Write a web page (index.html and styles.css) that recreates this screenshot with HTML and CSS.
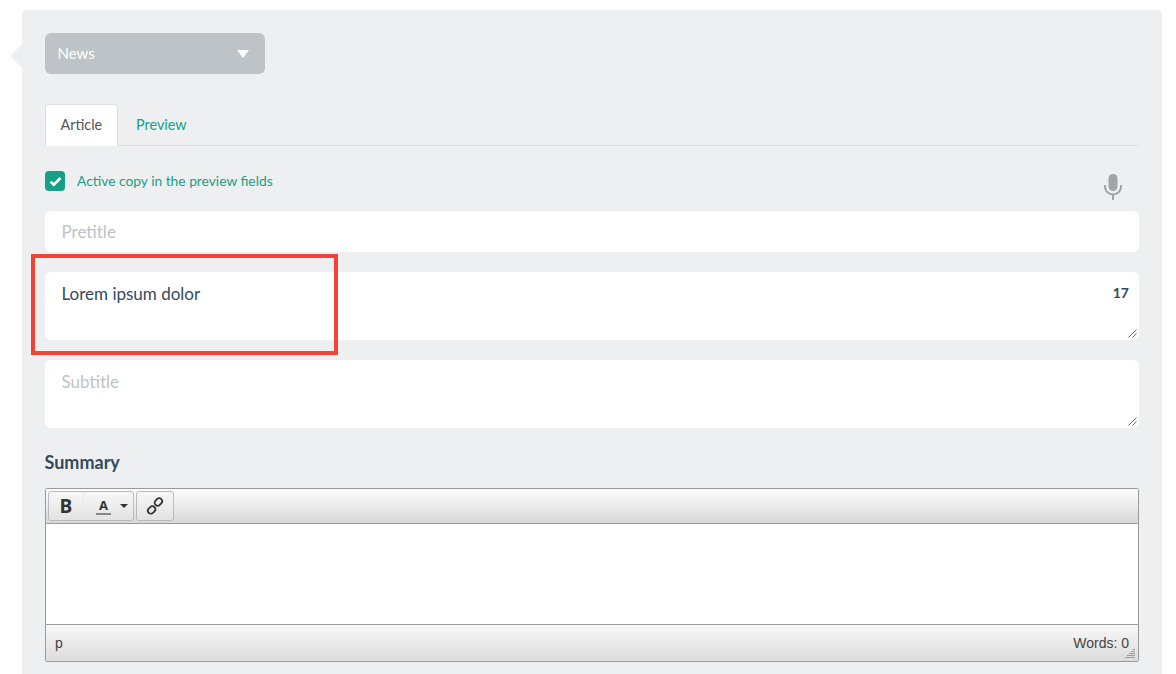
FILE: index.html
```html
<!DOCTYPE html>
<html lang="en">
  <head>
    <meta charset="UTF-8" />
    <title>Article</title>
    <link rel="stylesheet" href="styles.css">
  </head>
  <body>
    <div class="panel">
      <span class="panel-arrow"></span>
      <div class="select-box">
        <span class="select-label">News</span>
        <span class="select-caret"></span>
      </div>

      <ul class="tabs">
        <li class="tab active">Article</li>
        <li class="tab">Preview</li>
      </ul>

      <div class="copy-row">
        <label class="check-label">
          <span class="check-box">
            <svg width="13" height="11" viewBox="0 0 13 11"><path d="M1.5 5.6 L4.8 8.6 L11.5 2" fill="none" stroke="#fff" stroke-width="2.6"/></svg>
          </span>
          <span class="check-text">Active copy in the preview fields</span>
        </label>
        <svg class="mic" width="18" height="26" viewBox="0 0 18 26">
          <rect x="4.5" y="0" width="9" height="17" rx="4.5" fill="#a3a3a3"/>
          <path d="M1 11 v2 a8 7.5 0 0 0 16 0 v-2" fill="none" stroke="#a3a3a3" stroke-width="2"/>
          <rect x="8" y="20" width="2" height="6" fill="#a3a3a3"/>
        </svg>
      </div>

      <div class="field field-single placeholder">Pretitle</div>

      <div class="field-wrap">
        <div class="field field-multi">Lorem ipsum dolor</div>
        <span class="counter">17</span>
        <svg class="grip" width="9" height="9" viewBox="0 0 9 9"><path d="M0.5 8.5 L8.5 0.5 M4.5 8.5 L8.5 4.5" stroke="#666" stroke-width="1" fill="none"/></svg>
        <div class="highlight"></div>
      </div>

      <div class="field-wrap">
        <div class="field field-multi placeholder">Subtitle</div>
        <svg class="grip" width="9" height="9" viewBox="0 0 9 9"><path d="M0.5 8.5 L8.5 0.5 M4.5 8.5 L8.5 4.5" stroke="#666" stroke-width="1" fill="none"/></svg>
      </div>

      <h3 class="section-title">Summary</h3>

      <div class="editor">
        <div class="editor-toolbar">
          <div class="btn-group">
            <span class="btn btn-bold">B</span>
            <span class="btn btn-color"><span class="letter-a">A</span><span class="mini-caret"></span></span>
          </div>
          <div class="btn-group">
            <span class="btn btn-link">
              <svg width="18" height="18" viewBox="0 0 18 18" fill="none" stroke="#333" stroke-width="1.8">
                <rect x="8.4" y="2" width="8" height="6" rx="3" transform="rotate(-45 12.4 5)"/>
                <rect x="1.6" y="10" width="8" height="6" rx="3" transform="rotate(-45 5.6 13)"/>
              </svg>
            </span>
          </div>
        </div>
        <div class="editor-body"></div>
        <div class="editor-status">
          <span>p</span>
          <span>Words: 0</span>
          <svg class="status-grip" width="10" height="10" viewBox="0 0 10 10"><path d="M8 1.5 h2 M6 3.5 h4 M4 5.5 h6 M2 7.5 h8 M0 9.5 h10" stroke="#999" stroke-width="1"/></svg>
        </div>
      </div>
    </div>
  </body>
</html>
```

FILE: styles.css
```css
html,
body {
  margin: 0;
  height: 674px;
  overflow: hidden;
  background: #fff;
}

body {
  padding: 10px 14px 0 22px;
  box-sizing: border-box;
  font-family: Lato, sans-serif;
}

.panel {
  position: relative;
  height: 664px;
  box-sizing: border-box;
  padding: 23px 23px 0 23px;
  background: #eeeff1;
  border-radius: 4px 4px 0 0;
}
.panel-arrow {
  position: absolute;
  left: -12px;
  top: 34px;
  border-top: 12px solid transparent;
  border-bottom: 12px solid transparent;
  border-right: 12px solid #eeeff1;
}

.select-box {
  display: flex;
  justify-content: space-between;
  align-items: center;
  width: 220px;
  height: 41px;
  box-sizing: border-box;
  padding: 0 16px 0 12.5px;
  background: #bdc3c7;
  border-radius: 6px;
  color: #fff;
  font-size: 15px;
}
.select-label {
  margin-top: -2px;
}
.select-caret {
  border-left: 6px solid transparent;
  border-right: 6px solid transparent;
  border-top: 8px solid #fff;
}

.tabs {
  display: flex;
  margin: 30px 0 0 0;
  padding: 0;
  height: 41px;
  list-style: none;
  border-bottom: 1px solid #dcdfe1;
  font-size: 14.4px;
}
.tab {
  height: 41px;
  box-sizing: border-box;
  padding: 12px 19px 0 18px;
  color: #16a085;
}
.tab.active {
  padding: 11px 14.5px 0 14.5px;
  width: 73px;
  height: 42px;
  background: #fff;
  color: #555;
  border: 1px solid #dcdfe1;
  border-bottom: none;
  border-radius: 4px 4px 0 0;
}

.copy-row {
  display: flex;
  justify-content: space-between;
  align-items: flex-start;
  height: 40px;
  padding-top: 25px;
}
.check-label {
  display: flex;
  align-items: center;
  gap: 12px;
  color: #16a085;
  font-size: 13.8px;
}
.check-text {
  margin-top: -2px;
}
.check-box {
  display: flex;
  align-items: center;
  justify-content: center;
  width: 20px;
  height: 20px;
  background: #16a085;
  border-radius: 4px;
}
.mic {
  margin: 3px 17px 0 0;
}

.field {
  box-sizing: border-box;
  padding: 10px 16.5px;
  background: #fff;
  border-radius: 6px;
  color: #34495e;
  font-size: 17px;
  line-height: 22px;
}
.field-single {
  height: 41px;
}
.field-multi {
  height: 68px;
  padding-top: 11px;
}
.placeholder {
  color: #bdc3c7;
}
.field-wrap {
  position: relative;
  margin-top: 20px;
}
.counter {
  position: absolute;
  top: 12px;
  right: 10px;
  color: #34495e;
  font-size: 14px;
  font-weight: 700;
}
.grip {
  position: absolute;
  right: 2px;
  bottom: 2px;
}
.highlight {
  position: absolute;
  left: -14px;
  top: -18px;
  width: 299px;
  height: 93px;
  border: 4px solid #f44336;
}

.section-title {
  margin: 23px 0 15px -0.5px;
  color: #34495e;
  font-size: 18px;
  line-height: 22px;
  font-weight: 700;
}

.editor {
  height: 174px;
  box-sizing: border-box;
  display: flex;
  flex-direction: column;
  border: 1px solid #9a9a9a;
  border-radius: 2px;
  background: #fff;
}
.editor-toolbar {
  display: flex;
  gap: 2px;
  height: 35px;
  box-sizing: border-box;
  padding: 2px 2px 0 2px;
  background: linear-gradient(#fdfdfd, #d8d8d8);
  border-bottom: 1px solid #9a9a9a;
}
.btn-group {
  display: flex;
  height: 30px;
  box-sizing: border-box;
  border: 1px solid #bbb;
  border-radius: 3px;
  background: linear-gradient(#f7f7f7, #e2e2e2);
}
.btn {
  display: flex;
  align-items: center;
  justify-content: center;
  color: #333;
}
.btn-bold {
  width: 34px;
  border-right: 1px solid #e8e8e8;
  font-family: "Open Sans", sans-serif;
  font-size: 19px;
  font-weight: 700;
}
.btn-color {
  width: 49px;
  gap: 9px;
  padding-left: 7px;
  box-sizing: border-box;
  font-family: "Open Sans", sans-serif;
  font-size: 13px;
  font-weight: 700;
}
.letter-a {
  border-bottom: 2px solid #888;
  padding: 0 3.5px;
  line-height: 15px;
}
.mini-caret {
  border-left: 4px solid transparent;
  border-right: 4px solid transparent;
  border-top: 4px solid #333;
}
.btn-link {
  width: 36px;
}
.editor-body {
  flex: 1;
  background: #fff;
}
.editor-status {
  position: relative;
  display: flex;
  justify-content: space-between;
  align-items: center;
  height: 37px;
  box-sizing: border-box;
  padding: 0 9px;
  background: linear-gradient(#f8f8f8, #dcdcdc);
  border-top: 1px solid #9a9a9a;
  color: #444;
  font-family: "Liberation Sans", sans-serif;
  font-size: 14px;
}
.status-grip {
  position: absolute;
  right: 3px;
  bottom: 3px;
}
```
